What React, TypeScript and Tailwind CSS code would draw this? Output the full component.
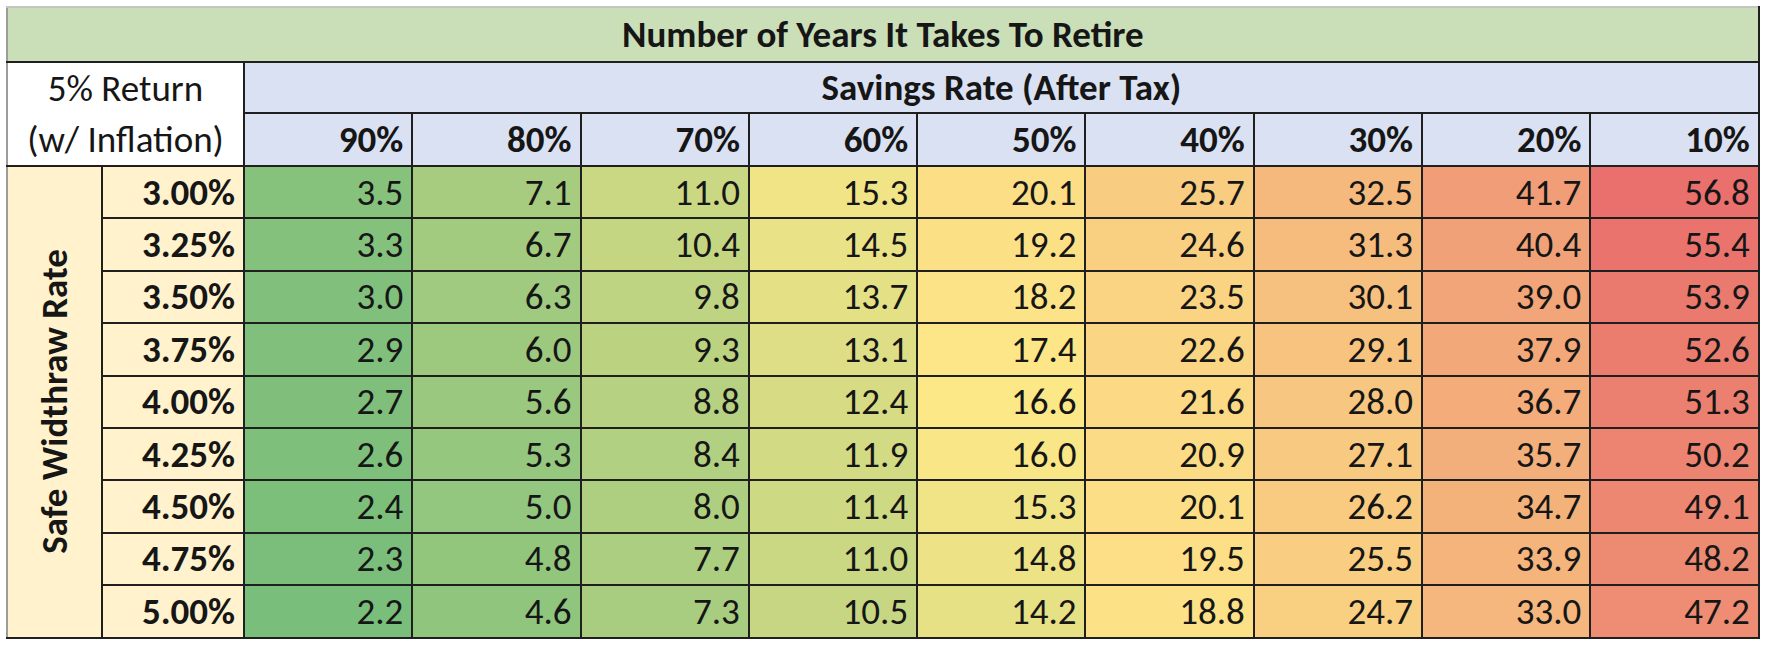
import React from "react";

const cols = ["90%", "80%", "70%", "60%", "50%", "40%", "30%", "20%", "10%"];
const rates = ["3.00%", "3.25%", "3.50%", "3.75%", "4.00%", "4.25%", "4.50%", "4.75%", "5.00%"];
const data: number[][] = [
  [3.5, 7.1, 11.0, 15.3, 20.1, 25.7, 32.5, 41.7, 56.8],
  [3.3, 6.7, 10.4, 14.5, 19.2, 24.6, 31.3, 40.4, 55.4],
  [3.0, 6.3, 9.8, 13.7, 18.2, 23.5, 30.1, 39.0, 53.9],
  [2.9, 6.0, 9.3, 13.1, 17.4, 22.6, 29.1, 37.9, 52.6],
  [2.7, 5.6, 8.8, 12.4, 16.6, 21.6, 28.0, 36.7, 51.3],
  [2.6, 5.3, 8.4, 11.9, 16.0, 20.9, 27.1, 35.7, 50.2],
  [2.4, 5.0, 8.0, 11.4, 15.3, 20.1, 26.2, 34.7, 49.1],
  [2.3, 4.8, 7.7, 11.0, 14.8, 19.5, 25.5, 33.9, 48.2],
  [2.2, 4.6, 7.3, 10.5, 14.2, 18.8, 24.7, 33.0, 47.2],
];

const MIN = 2.2;
const MID = 16.6;
const MAX = 56.8;
const GREEN = [122, 190, 123];
const YELLOW = [253, 232, 136];
const RED = [233, 112, 108];

function mix(a: number[], b: number[], t: number) {
  return `rgb(${a.map((v, i) => Math.round(v + (b[i] - v) * t)).join(",")})`;
}

function colorFor(v: number) {
  if (v <= MID) return mix(GREEN, YELLOW, (v - MIN) / (MID - MIN));
  return mix(YELLOW, RED, (v - MID) / (MAX - MID));
}

const font = "font-['Carlito','Lato',sans-serif]";

export default function App() {
  return (
    <div className={`w-[1766px] h-[650px] bg-white pt-[6px] pl-[6px] text-[37px] text-[#161616] ${font}`}>
      <table className="border-collapse table-fixed w-[1752px]">
        <colgroup>
          <col className="w-[95px]" />
          <col className="w-[142px]" />
          {cols.map((c) => (
            <col key={c} className="w-[168.3px]" />
          ))}
        </colgroup>
        <tbody>
          <tr className="h-[55px]">
            <td
              colSpan={11}
              className="border-2 border-[#1f1f1f] border-t-[#c4c4c4] border-l-[#9c9c9c] bg-[#cadfb8] text-center font-bold leading-none"
            >
              Number of Years It Takes To Retire
            </td>
          </tr>
          <tr className="h-[51px]">
            <td colSpan={2} className="border-2 border-b-0 border-[#1f1f1f] border-l-[#9c9c9c] bg-white text-center leading-none">
              5% Return
            </td>
            <td colSpan={9} className="border-2 border-[#1f1f1f] bg-[#d9e1f2] text-center font-bold leading-none">
              Savings Rate (After Tax)
            </td>
          </tr>
          <tr className="h-[53px]">
            <td colSpan={2} className="border-2 border-t-0 border-[#1f1f1f] border-l-[#9c9c9c] bg-white text-center leading-none">
              (w/ Inflation)
            </td>
            {cols.map((c) => (
              <td key={c} className="border-2 border-[#1f1f1f] bg-[#d9e1f2] text-right pr-[8px] font-bold leading-none">
                {c}
              </td>
            ))}
          </tr>
          {rates.map((r, i) => (
            <tr key={r} className="h-[52.4px]">
              {i === 0 && (
                <td rowSpan={9} className="border-2 border-[#1f1f1f] border-l-[#9c9c9c] bg-[#fff2cc] align-middle">
                  <div className="flex justify-center">
                    <span className="[writing-mode:vertical-rl] rotate-180 font-bold leading-none whitespace-nowrap">
                      Safe Widthraw Rate
                    </span>
                  </div>
                </td>
              )}
              <td className="border-2 border-[#1f1f1f] bg-[#fff2cc] text-right pr-[8px] font-bold leading-none">{r}</td>
              {data[i].map((v, j) => (
                <td
                  key={j}
                  className="border-2 border-[#1f1f1f] text-right pr-[8px] leading-none"
                  style={{ backgroundColor: colorFor(v) }}
                >
                  {v.toFixed(1)}
                </td>
              ))}
            </tr>
          ))}
        </tbody>
      </table>
    </div>
  );
}
